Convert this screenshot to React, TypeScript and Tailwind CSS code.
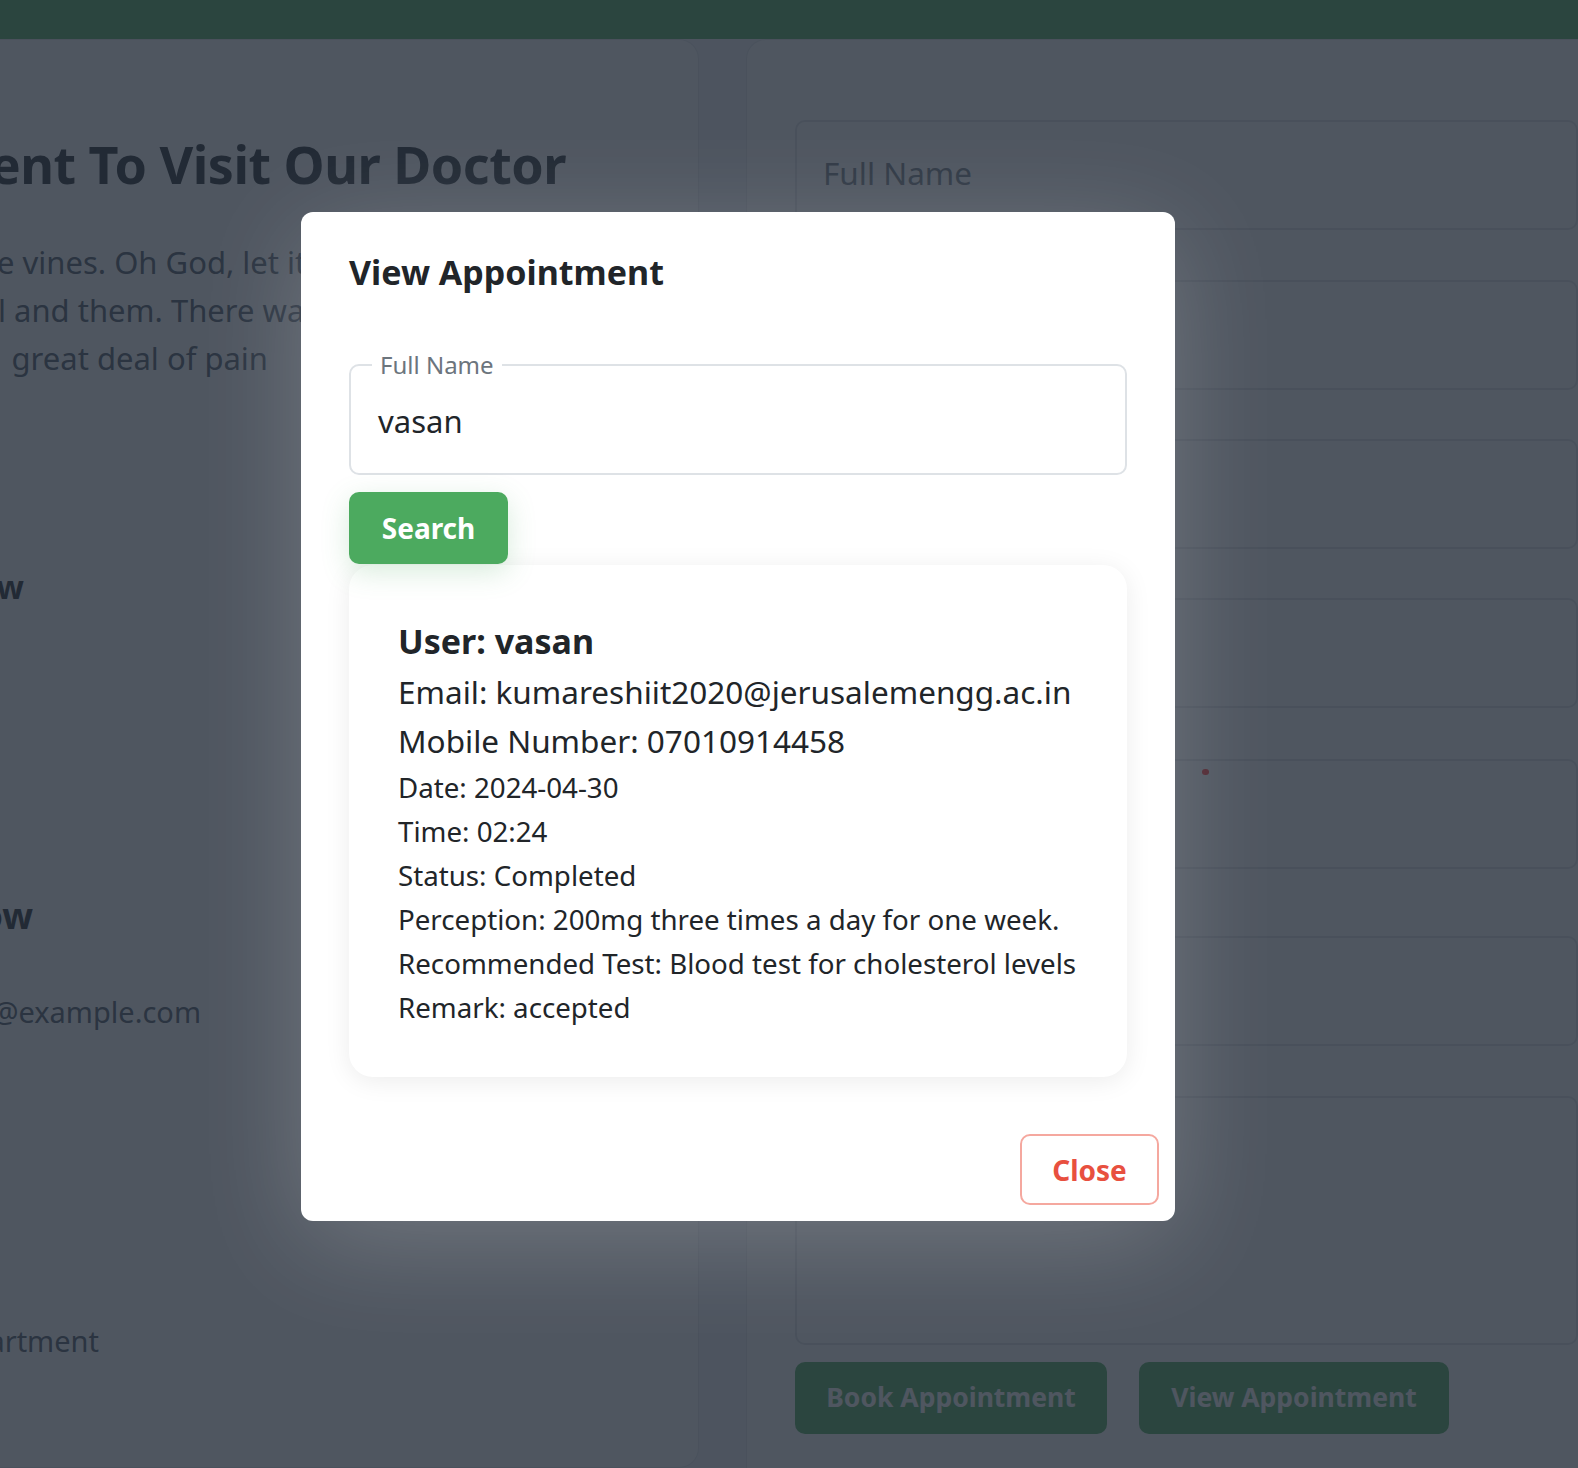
import React from 'react';

const font = "font-['Noto_Sans','Open_Sans',sans-serif]";

// text that runs off the left edge of the screen; only its tail is shown
function Clipped({ end, className, children }: { end: string; className: string; children: React.ReactNode }) {
  return (
    <div className={`${end} flex justify-end overflow-hidden`}>
      <div className={`shrink-0 whitespace-nowrap ${className}`}>{children}</div>
    </div>
  );
}

const inputBox = 'h-[110px] rounded-[10px] border-2 border-[#dee2e6] bg-white';

function BackgroundPage() {
  return (
    <div className="flex h-full flex-col bg-[#f4f6f8]">
      <div className="h-[39px] shrink-0 bg-[#4caa5a]" />
      <div className="flex flex-1 gap-[47px]">
        {/* left info card */}
        <div className="w-[699px] shrink-0 rounded-r-[20px] border border-l-0 border-[#e3e6ea] bg-white text-[#212529]">
          <div className="mt-[92px]">
            <Clipped end="w-[566px]" className="text-[52px] font-bold leading-[64px] tracking-[-0.5px]">
              Book An Appointment To Visit Our Doctor
            </Clipped>
          </div>
          <div className="mt-[42px] text-[31px] leading-[48px] text-[#4b5563]">
            <div className="-ml-[3px] whitespace-nowrap">e vines. Oh God, let it be so</div>
            <div className="-ml-[2px] whitespace-nowrap">l and them. There was a</div>
            <Clipped end="w-[268px]" className="">
              great deal of pain
            </Clipped>
          </div>
          <div className="mt-[185px]">
            <Clipped end="w-[24px]" className="text-[32px] font-bold leading-[40px]">Follow</Clipped>
          </div>
          <div className="mt-[287px]">
            <Clipped end="w-[33px]" className="text-[36px] font-bold leading-[44px]">Follow</Clipped>
          </div>
          <div className="mt-[54px]">
            <Clipped end="w-[201px]" className="text-[29px] leading-[40px] text-[#4b5563]">info@example.com</Clipped>
          </div>
          <div className="mt-[289px]">
            <Clipped end="w-[99px]" className="text-[29px] leading-[40px] text-[#4b5563]">Department</Clipped>
          </div>
        </div>

        {/* right form card */}
        <div className="flex-1 rounded-tl-[20px] border-l border-t border-[#e3e6ea] bg-white pl-[48px] pt-[80px]">
          <div className="flex flex-col">
            <div className={`${inputBox} flex items-center px-[26px] pb-[4px] text-[31.5px] text-[#6c757d]`}>Full Name</div>
            <div className={`${inputBox} mt-[50px]`} />
            <div className={`${inputBox} mt-[49px]`} />
            <div className={`${inputBox} mt-[49px]`} />
            <div className={`${inputBox} relative mt-[51px]`}>
              <span className="absolute left-[405px] top-[8px] h-[6px] w-[7px] rounded-full bg-[#ff1a1a]" />
            </div>
            <div className={`${inputBox} mt-[67px]`} />
            <div className="mt-[50px] h-[249px] rounded-[10px] border-2 border-[#dee2e6] bg-white" />
          </div>
          <div className="mt-[17px] flex gap-[32px]">
            <button className="h-[72px] w-[312px] rounded-[10px] bg-[#4caa5a] text-[26.5px] font-bold text-white">
              Book Appointment
            </button>
            <button className="h-[72px] w-[310px] rounded-[10px] bg-[#4caa5a] text-[26.5px] font-bold text-white">
              View Appointment
            </button>
          </div>
        </div>
      </div>
    </div>
  );
}

const details = [
  'Date: 2024-04-30',
  'Time: 02:24',
  'Status: Completed',
  'Perception: 200mg three times a day for one week.',
  'Recommended Test: Blood test for cholesterol levels',
  'Remark: accepted',
];

function ViewAppointmentModal() {
  return (
    <div className="absolute left-[301px] top-[212px] w-[874px] rounded-[12px] bg-white shadow-[0_20px_110px_rgba(255,255,255,0.2)]">
      <div className="px-[48px] pt-[40px]">
        <h2 className="text-[34px] font-bold leading-[41px] text-[#212529]">View Appointment</h2>

        <fieldset className="mt-[58px] rounded-[10px] border-2 border-[#dee2e6] px-[27px] pb-[32px] pt-[22px]">
          <legend className="-ml-[6px] px-[8px] text-[24px] leading-[28px] text-[#6c757d]">Full Name</legend>
          <div className="text-[31px] leading-[40px] text-[#212529]">vasan</div>
        </fieldset>

        <button className="mt-[17px] h-[72px] w-[159px] rounded-[10px] bg-[#4caa5f] text-[28px] font-bold text-white shadow-[0_8px_28px_rgba(76,170,95,0.22)]">
          Search
        </button>

        <div className="mt-[1px] rounded-[24px] bg-white px-[49px] pb-[48px] pt-[56px] text-[#212529] shadow-[0_4px_26px_rgba(0,0,0,0.08)]">
          <h3 className="mb-[6px] text-[34px] font-bold leading-[40px]">User: vasan</h3>
          <p className="text-[31.5px] leading-[49px]">Email: kumareshiit2020@jerusalemengg.ac.in</p>
          <p className="text-[31.5px] leading-[49px]">Mobile Number: 07010914458</p>
          {details.map((d) => (
            <p key={d} className="text-[27.7px] leading-[44px]">
              {d}
            </p>
          ))}
        </div>
      </div>

      <div className="flex justify-end px-[16px] pb-[16px] pt-[57px]">
        <button className="h-[71px] w-[139px] rounded-[10px] border-2 border-[#f5a89f] bg-white text-[28px] font-bold text-[#e8503f]">
          Close
        </button>
      </div>
    </div>
  );
}

export default function App() {
  return (
    <div className={`relative h-[1468px] w-full overflow-hidden ${font}`}>
      <BackgroundPage />
      {/* dim backdrop */}
      <div className="absolute inset-0 bg-[rgba(35,44,56,0.8)]" />
      <ViewAppointmentModal />
    </div>
  );
}
